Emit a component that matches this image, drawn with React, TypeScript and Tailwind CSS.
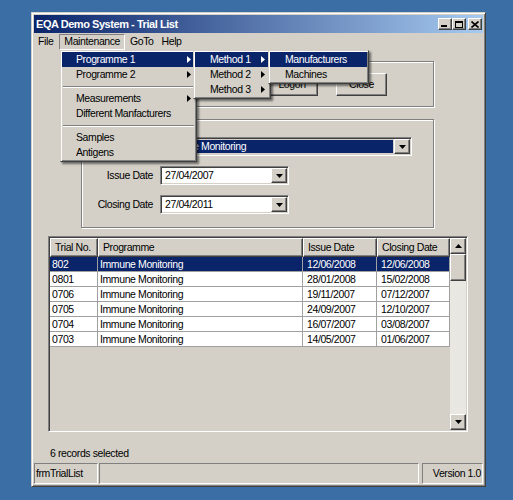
import React from 'react';

// classic win9x bevels
const raised =
  'border border-t-white border-l-white border-r-[#404040] border-b-[#404040] shadow-[inset_-1px_-1px_0_#808080]';
const sunken =
  'border border-t-[#808080] border-l-[#808080] border-r-white border-b-white shadow-[inset_1px_1px_0_#404040,inset_-1px_-1px_0_#d4d0c8]';
const thinSunken = 'border border-t-[#808080] border-l-[#808080] border-r-white border-b-white';
const etched = 'border border-[#808080] shadow-[inset_1px_1px_0_#fff,1px_1px_0_#fff]';
const menuFrame =
  'absolute bg-[#d4d0c8] p-[1px] border border-t-[#d4d0c8] border-l-[#d4d0c8] border-r-[#404040] border-b-[#404040] shadow-[inset_1px_1px_0_#fff,inset_-1px_-1px_0_#808080,2px_2px_2px_rgba(0,0,0,0.5)]';

const DownArrow = () => (
  <svg width="7" height="4" viewBox="0 0 7 4">
    <path d="M0 0h7L3.5 4z" fill="#000" />
  </svg>
);

const UpArrow = () => (
  <svg width="7" height="4" viewBox="0 0 7 4">
    <path d="M0 4h7L3.5 0z" fill="#000" />
  </svg>
);

const RightArrow = () => (
  <svg width="4" height="7" viewBox="0 0 4 7">
    <path d="M0 0L4 3.5L0 7z" fill="currentColor" />
  </svg>
);

const DropButton = () => (
  <div className={`${raised} bg-[#d4d0c8] h-full w-[16px] flex items-center justify-center shrink-0`}>
    <DownArrow />
  </div>
);

interface ItemProps {
  label: string;
  active?: boolean;
  arrow?: boolean;
  pl?: string;
}

const MenuItem = ({ label, active, arrow, pl = 'pl-[14px]' }: ItemProps) => (
  <div
    className={`h-[15px] flex items-center justify-between pr-[4px] ${pl} ${
      active ? 'bg-[#0a246a] text-white' : 'text-black'
    }`}
  >
    <span>{label}</span>
    {arrow && <RightArrow />}
  </div>
);

const Separator = () => (
  <div className="h-[9px] flex flex-col justify-center px-[1px]">
    <div className="h-px bg-[#808080]" />
    <div className="h-px bg-white" />
  </div>
);

const rows = [
  ['802', 'Immune Monitoring', '12/06/2008', '12/06/2008'],
  ['0801', 'Immune Monitoring', '28/01/2008', '15/02/2008'],
  ['0706', 'Immune Monitoring', '19/11/2007', '07/12/2007'],
  ['0705', 'Immune Monitoring', '24/09/2007', '12/10/2007'],
  ['0704', 'Immune Monitoring', '16/07/2007', '03/08/2007'],
  ['0703', 'Immune Monitoring', '14/05/2007', '01/06/2007'],
];

const colW = ['w-[48px]', 'w-[205px]', 'w-[74px]', 'w-[73px]'];
const headers = ['Trial No.', 'Programme', 'Issue Date', 'Closing Date'];

export default function App() {
  return (
    <div className="relative w-[513px] h-[500px] bg-[#3a6ea5] pt-[12px] pl-[31px] font-['Liberation_Sans',Arial,sans-serif] text-[10.5px] tracking-[-0.4px] leading-none text-black overflow-hidden">
      {/* window */}
      <div className="w-[455px] h-[475px] bg-[#d4d0c8] border border-t-[#d4d0c8] border-l-[#d4d0c8] border-r-[#404040] border-b-[#404040] shadow-[inset_1px_1px_0_#fff,inset_-1px_-1px_0_#808080] p-[2px] flex flex-col">
        {/* title bar */}
        <div className="h-[18px] shrink-0 flex items-center bg-[linear-gradient(to_right,#0a246a,#a6caf0)] pl-[2px] pr-[1px]">
          <span className="text-white font-bold text-[11px] tracking-[-0.45px]">EQA Demo System - Trial List</span>
          <div className="ml-auto flex items-center">
            <div className={`${raised} bg-[#d4d0c8] w-[14px] h-[12px] flex items-end justify-center pb-[2px]`}>
              <div className="w-[6px] h-[2px] bg-black -ml-[2px]" />
            </div>
            <div className={`${raised} bg-[#d4d0c8] w-[14px] h-[12px] flex items-center justify-center`}>
              <div className="w-[8px] h-[7px] border border-black border-t-2" />
            </div>
            <div className={`${raised} bg-[#d4d0c8] w-[14px] h-[12px] ml-[2px] flex items-center justify-center`}>
              <svg width="8" height="7" viewBox="0 0 8 7">
                <path d="M0.5 0.5L7.5 6.5M7.5 0.5L0.5 6.5" stroke="#000" strokeWidth="1.6" />
              </svg>
            </div>
          </div>
        </div>

        {/* menu bar */}
        <div className="h-[17px] shrink-0 flex items-center">
          <div className="h-[16px] flex items-center pl-[4px] pr-[6px]">File</div>
          <div className={`${thinSunken} h-[16px] flex items-center px-[4px]`}>Maintenance</div>
          <div className="h-[16px] flex items-center pl-[5px] pr-[8px]">GoTo</div>
          <div className="h-[16px] flex items-center">Help</div>
        </div>

        {/* logon group */}
        <div className={`${etched} mt-[11px] ml-[47px] w-[353px] h-[46px] shrink-0 flex items-start pt-[11px] pl-[184px] gap-[18px]`}>
          <button className={`${raised} bg-[#d4d0c8] w-[52px] h-[23px] flex items-center justify-center`}>Logon</button>
          <button className={`${raised} bg-[#d4d0c8] w-[51px] h-[23px] flex items-center justify-center`}>Close</button>
        </div>

        {/* selection group */}
        <div className={`${etched} mt-[12px] ml-[47px] w-[353px] h-[109px] shrink-0 pt-[17px] flex flex-col gap-[10px]`}>
          <div className="flex items-center h-[19px]">
            <span className="w-[71px]" />
            <div className={`${sunken} ml-[6px] w-[253px] h-[19px] p-[1px] flex`}>
              <div className="flex-1 m-[1px] bg-[#0a246a] text-white flex items-center pl-[1px]">Immune Monitoring</div>
              <DropButton />
            </div>
          </div>
          <div className="flex items-center h-[19px]">
            <span className="w-[71px] text-right">Issue Date</span>
            <div className={`${sunken} ml-[7px] w-[129px] h-[19px] p-[1px] flex bg-white`}>
              <div className="flex-1 flex items-center pl-[3px]">27/04/2007</div>
              <DropButton />
            </div>
          </div>
          <div className="flex items-center h-[19px]">
            <span className="w-[71px] text-right">Closing Date</span>
            <div className={`${sunken} ml-[7px] w-[129px] h-[19px] p-[1px] flex bg-white`}>
              <div className="flex-1 flex items-center pl-[3px]">27/04/2011</div>
              <DropButton />
            </div>
          </div>
        </div>

        {/* trial list */}
        <div className={`${sunken} mt-[8px] ml-[14px] w-[420px] h-[196px] shrink-0 p-[1px] flex`}>
          <div className="w-[400px] flex flex-col">
            <div className="h-[19px] flex shrink-0">
              {headers.map((h, i) => (
                <div key={h} className={`${raised} ${colW[i]} h-full bg-[#d4d0c8] flex items-center pl-[4px]`}>
                  {h}
                </div>
              ))}
            </div>
            {rows.map((r, ri) => (
              <div
                key={r[0]}
                className={`h-[15px] flex border-b border-[#a0a0a0] ${ri === 0 ? 'bg-[#0a246a] text-white' : 'bg-white'}`}
              >
                {r.map((c, ci) => (
                  <div key={ci} className={`${colW[ci]} h-full border-r border-[#a0a0a0] flex items-center ${ci >= 2 ? 'pl-[4px]' : 'pl-[2px]'}`}>
                    {c}
                  </div>
                ))}
              </div>
            ))}
          </div>
          <div className="w-[16px] flex flex-col">
            <div className={`${raised} bg-[#d4d0c8] h-[16px] flex items-center justify-center shrink-0`}>
              <UpArrow />
            </div>
            <div className={`${raised} bg-[#d4d0c8] h-[27px] shrink-0`} />
            <div className="flex-1 bg-[#e9e7e2]" />
            <div className={`${raised} bg-[#d4d0c8] h-[16px] flex items-center justify-center shrink-0`}>
              <DownArrow />
            </div>
          </div>
        </div>

        <div className="mt-[14px] ml-[16px] h-[14px] shrink-0 flex items-center">6 records selected</div>

        {/* status bar */}
        <div className="mt-[3px] h-[21px] shrink-0 flex">
          <div className={`${thinSunken} w-[64px] h-full flex items-center pl-[1px]`}>frmTrialList</div>
          <div className={`${thinSunken} ml-[1px] w-[320px] h-full`} />
          <div className={`${thinSunken} ml-[3px] w-[61px] h-full flex items-center justify-end pr-[1px]`}>Version 1.0</div>
        </div>
      </div>

      {/* Maintenance dropdown */}
      <div className={`${menuFrame} left-[60px] top-[50px] w-[137px]`}>
        <MenuItem label="Programme 1" active arrow />
        <MenuItem label="Programme 2" arrow />
        <Separator />
        <MenuItem label="Measurements" arrow />
        <MenuItem label="Different Manfacturers" />
        <Separator />
        <MenuItem label="Samples" />
        <MenuItem label="Antigens" />
      </div>

      {/* Programme 1 submenu */}
      <div className={`${menuFrame} left-[193px] top-[50px] w-[78px]`}>
        <MenuItem label="Method 1" active arrow pl="pl-[15px]" />
        <MenuItem label="Method 2" arrow pl="pl-[15px]" />
        <MenuItem label="Method 3" arrow pl="pl-[15px]" />
      </div>

      {/* Method 1 submenu */}
      <div className={`${menuFrame} left-[268px] top-[50px] w-[101px]`}>
        <MenuItem label="Manufacturers" active pl="pl-[15px]" />
        <MenuItem label="Machines" pl="pl-[15px]" />
      </div>
    </div>
  );
}
